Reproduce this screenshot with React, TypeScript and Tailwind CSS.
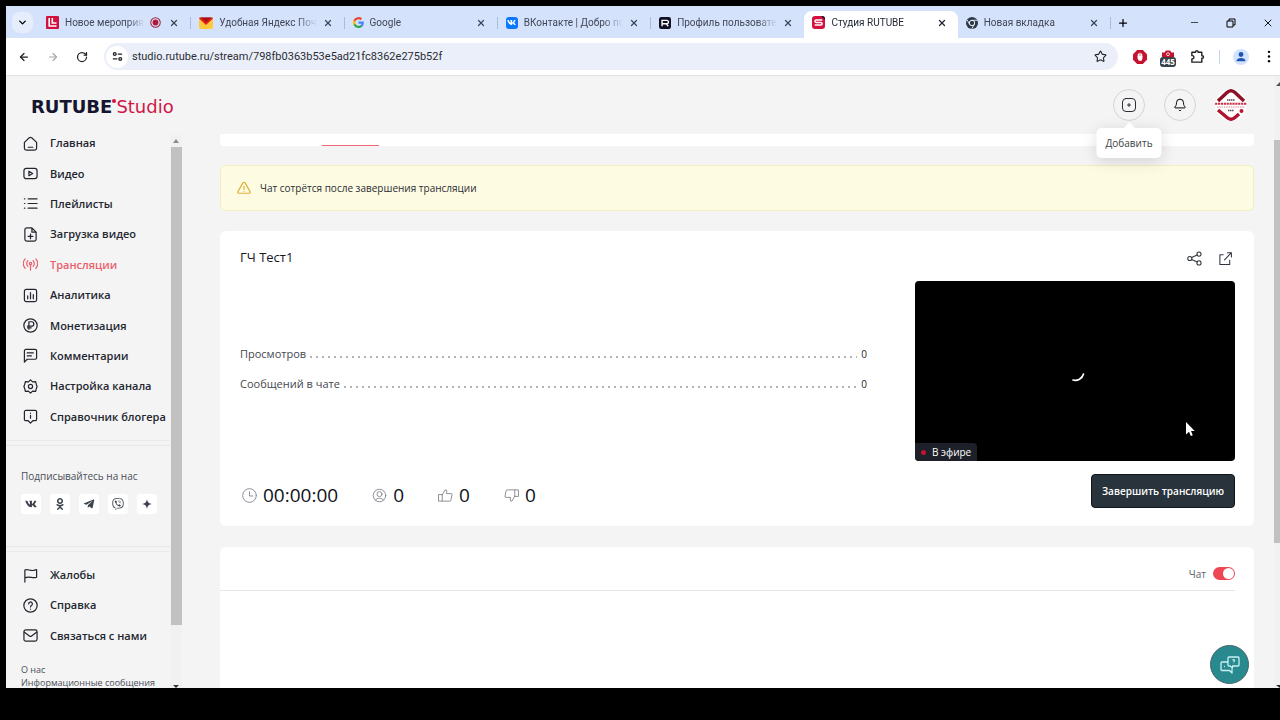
import type { ReactNode } from "react";
import {
  ArrowLeft,
  ArrowRight,
  Bell,
  ChevronDown,
  Minus,
  Plus,
  RotateCw,
  Star,
  X,
} from "lucide-react";
import { FaOdnoklassniki, FaTelegramPlane, FaViber, FaVk } from "react-icons/fa";

type IconProps = { children: ReactNode; className?: string; width?: number };

function Icon({ children, className = "size-4", width = 1.3 }: IconProps) {
  return (
    <svg
      viewBox="0 0 16 16"
      fill="none"
      stroke="currentColor"
      strokeWidth={width}
      strokeLinecap="round"
      strokeLinejoin="round"
      className={`shrink-0 ${className}`}
      aria-hidden="true"
    >
      {children}
    </svg>
  );
}

/* ---------- browser tabs ---------- */

const favicons = {
  event: (
    <svg viewBox="0 0 13 13" className="size-[13px] shrink-0">
      <rect width="13" height="13" rx="1" fill="#d0103f" />
      <path d="M3.2 2v8h7.3M6.3 2v5h4.2" fill="none" stroke="#fff" strokeWidth="1.6" />
    </svg>
  ),
  mail: (
    <svg viewBox="0 0 14 12" className="h-[12px] w-[14px] shrink-0">
      <rect y="1" width="14" height="11" rx="2" fill="#ffc93c" />
      <path d="M0 1.6Q0 .5 1.2.5h11.6q1.2 0 1.2 1.1L7 8Z" fill="#e3201b" />
      <path d="M1.5.5h11L7 5.5Z" fill="#a81414" />
    </svg>
  ),
  google: (
    <svg viewBox="0 0 24 24" className="size-[11px] shrink-0">
      <path fill="#4285F4" d="M23.5 12.3c0-.8-.1-1.6-.2-2.3H12v4.5h6.5a5.5 5.5 0 0 1-2.4 3.6v3h3.900c2.200-2.100 3.500-5.200 3.500-8.800Z" />
      <path fill="#34A853" d="M12 24c3.200 0 6-1.100 8-2.900l-3.900-3c-1.100.7-2.500 1.200-4.100 1.200-3.100 0-5.800-2.100-6.700-5H1.300v3.100A12 12 0 0 0 12 24Z" />
      <path fill="#FBBC05" d="M5.300 14.300a7.200 7.200 0 0 1 0-4.600V6.600h-4a12 12 0 0 0 0 10.800l4-3.100Z" />
      <path fill="#EA4335" d="M12 4.800c1.800 0 3.300.6 4.600 1.800l3.400-3.400A12 12 0 0 0 1.300 6.600l4 3.100c.9-2.800 3.600-4.900 6.700-4.900Z" />
    </svg>
  ),
  vk: (
    <span className="flex size-[12px] shrink-0 items-center justify-center rounded-[3px] bg-[#0a77ff]">
      <FaVk className="size-[9px] text-white" />
    </span>
  ),
  profile: (
    <svg viewBox="0 0 13 13" className="size-[12px] shrink-0">
      <rect width="13" height="13" rx="2.500" fill="#100f24" />
      <path d="M3.300 10V3.700h5.200a1.500 1.500 0 0 1 0 3.600H3.300M8 7.400l2 2.600" fill="none" stroke="#fff" strokeWidth="1.500" />
    </svg>
  ),
  studio: (
    <svg viewBox="0 0 13 13" className="size-[13px] shrink-0">
      <rect width="13" height="13" rx="3" fill="#d3123f" />
      <path d="M10 0a3 3 0 0 1 3 3v1L9 0Z" fill="#1c1530" />
      <path d="M10.300 3.900H4.200a1.200 1.200 0 0 0 0 2.500h4.600a1.300 1.300 0 0 1 0 2.700H2.700" fill="none" stroke="#fff" strokeWidth="1.500" />
    </svg>
  ),
  chrome: (
    <svg viewBox="0 0 12 12" className="size-[12px] shrink-0">
      <circle cx="6" cy="6" r="6" fill="#2e3a46" />
      <circle cx="6" cy="6" r="2.700" fill="#2e3a46" stroke="#e9effb" strokeWidth="1" />
      <path d="M6 3.300h5.200M3.600 7.300 1.200 3M8.300 7.400l-2.500 4.400" stroke="#e9effb" strokeWidth=".9" />
    </svg>
  ),
};

type TabInfo = { title: string; icon: keyof typeof favicons; active?: boolean; recording?: boolean; divider?: boolean };

const tabs: TabInfo[] = [
  { title: "Новое мероприят", icon: "event", recording: true, divider: true },
  { title: "Удобная Яндекс Почт", icon: "mail", divider: true },
  { title: "Google", icon: "google", divider: true },
  { title: "ВКонтакте | Добро по", icon: "vk", divider: true },
  { title: "Профиль пользовате", icon: "profile" },
  { title: "Студия RUTUBE", icon: "studio", active: true },
  { title: "Новая вкладка", icon: "chrome", divider: true },
];

function Tab({ title, icon, active, recording, divider }: TabInfo) {
  return (
    <div className="flex h-full min-w-0 flex-1 items-end">
      <div
        role="tab"
        aria-selected={!!active}
        className={`flex h-[27px] min-w-0 flex-1 items-center gap-[6px] pr-[11px] pb-[4px] pl-2 ${
          active ? "rounded-t-lg bg-white text-[#1f2430]" : "text-[#3f4757]"
        }`}
      >
        {favicons[icon]}
        <span className="min-w-0 flex-1 overflow-hidden font-['Roboto',sans-serif] text-[10px] leading-4 whitespace-nowrap [mask-image:linear-gradient(to_right,black_80%,transparent)]">
          {title}
        </span>
        {recording && (
          <svg viewBox="0 0 12 12" className="mr-[2px] size-[11px] shrink-0">
            <circle cx="6" cy="6" r="5.200" fill="none" stroke="#9c2340" strokeWidth="1.100" />
            <circle cx="6" cy="6" r="3.200" fill="#b3173a" />
          </svg>
        )}
        <button type="button" aria-label="Закрыть вкладку" className="shrink-0">
          <X className="size-[10px]" strokeWidth={3} />
        </button>
      </div>
      {divider && <span className="mb-[9px] h-3 w-px bg-[#a9bce0]" />}
    </div>
  );
}

function TabStrip() {
  return (
    <div className="flex h-8 shrink-0 items-end bg-[#d5e2fb]">
      <button
        type="button"
        aria-label="Поиск вкладок"
        className="mb-[5px] ml-[6px] flex size-[21px] shrink-0 items-center justify-center rounded-lg bg-[#e6eefd]"
      >
        <ChevronDown className="size-[11px]" strokeWidth={3} />
      </button>
      <div role="tablist" className="ml-[5px] flex h-full min-w-0 shrink basis-[1073px]">
        {tabs.map((tab) => (
          <Tab key={tab.title} {...tab} />
        ))}
      </div>
      <div className="flex h-[27px] flex-1 items-center justify-between pb-[4px] pl-[6px]">
        <button type="button" aria-label="Новая вкладка">
          <Plus className="size-3" strokeWidth={2.5} />
        </button>
        <div className="flex items-center gap-[26px] pr-[6px]">
          <button type="button" aria-label="Свернуть">
            <Minus className="size-[11px]" strokeWidth={1.500} />
          </button>
          <button type="button" aria-label="Восстановить">
            <svg viewBox="0 0 10 10" className="size-[10px]" fill="none" stroke="currentColor" strokeWidth="1">
              <path d="M1 3h6v6H1ZM3 3V1h6v6H7" />
            </svg>
          </button>
          <button type="button" aria-label="Закрыть">
            <X className="size-3" strokeWidth={1.800} />
          </button>
        </div>
      </div>
    </div>
  );
}

function AddressBar() {
  return (
    <div className="flex h-[38px] shrink-0 items-center border-b border-[#dfe1e6] bg-white pr-[9px] pl-3 text-[#202124]">
      <div className="flex items-center gap-[17px]">
        <button type="button" aria-label="Назад">
          <ArrowLeft className="size-3" strokeWidth={2.500} />
        </button>
        <button type="button" aria-label="Вперёд" className="text-[#a2a5aa]">
          <ArrowRight className="size-3" strokeWidth={2.200} />
        </button>
        <button type="button" aria-label="Обновить">
          <RotateCw className="size-3" strokeWidth={2.500} />
        </button>
      </div>
      <div className="ml-4 flex h-[27px] flex-1 items-center rounded-full bg-[#ebeff9] pr-[11px] pl-[2px]">
        <button
          type="button"
          aria-label="Сведения о сайте"
          className="flex size-[22px] items-center justify-center rounded-full bg-white"
        >
          <Icon className="size-[11px]" width={1.900}>
            <circle cx="4" cy="4.500" r="2" />
            <path d="M9 4.500h5M2 11.500h5" />
            <circle cx="12" cy="11.500" r="2" />
          </Icon>
        </button>
        <input
          type="text"
          aria-label="Адресная строка"
          defaultValue="studio.rutube.ru/stream/798fb0363b53e5ad21fc8362e275b52f"
          className="ml-1 min-w-0 flex-1 bg-transparent font-['Roboto',sans-serif] text-[11px] leading-4 text-[#2a2d33] outline-none"
        />
        <button type="button" aria-label="Добавить в закладки">
          <Star className="size-[13px]" strokeWidth={2} />
        </button>
      </div>
      <div className="ml-[15px] flex items-center">
        <svg viewBox="0 0 14 14" className="size-[14px]">
          <path d="M4.200 0h5.600L14 4.200v5.600L9.800 14H4.200L0 9.800V4.200Z" fill="#c4122f" />
          <path d="M5.400 7V4.200M7 6V3.200M8.600 7V4.200" stroke="#fff" strokeWidth="1.300" strokeLinecap="round" />
          <path d="M4.600 6h4.800v2.500Q9.200 11 7.200 11 5.300 11 4.600 8.500Z" fill="#fff" />
        </svg>
        <div className="ml-[13px] flex w-4 flex-col items-center pt-1">
          <svg viewBox="0 0 14 7" className="h-[7px] w-[14px]">
            <path d="M1 7V2.500h2.500L5 .5h4l1.500 2H13V7Z" fill="#c4122f" />
            <circle cx="7" cy="4.200" r="1.500" fill="none" stroke="#fff" strokeWidth=".8" />
          </svg>
          <span className="rounded-[3px] bg-[#3a4147] px-px text-[8px] leading-[10px] font-bold text-white">445</span>
        </div>
        <Icon className="ml-[14px] size-[15px]" width={1.500}>
          <path d="M2 3.500h4V3a1.300 1.300 0 0 1 2.600 0v.5h4v3.700h.5a1.300 1.300 0 0 1 0 2.600h-.5V14H2v-3.300h.4a1.700 1.700 0 0 0 0-3.600H2Z" />
        </Icon>
        <span className="ml-[14px] h-[14px] w-px bg-[#c9d6f0]" />
        <svg viewBox="0 0 16 16" className="ml-[13px] size-4">
          <circle cx="8" cy="8" r="8" fill="#d3e2fd" />
          <circle cx="8" cy="5.500" r="2.400" fill="#1f55b5" />
          <path d="M3.500 12.300c0-4.400 9-4.400 9 0Z" fill="#1f55b5" />
        </svg>
        <svg viewBox="0 0 4 14" className="ml-[18px] h-[13px] w-1">
          <circle cx="2" cy="2" r="1.300" />
          <circle cx="2" cy="7" r="1.300" />
          <circle cx="2" cy="12" r="1.300" />
        </svg>
      </div>
    </div>
  );
}

/* ---------- sidebar ---------- */

type NavItem = { label: string; icon: ReactNode; active?: boolean };

const mainNav: NavItem[] = [
  { label: "Главная", icon: <path d="M1.500 6.800 6.700 1.900a2 2 0 0 1 2.600 0l5.200 4.900V13a2 2 0 0 1-2 2h-9a2 2 0 0 1-2-2ZM5.500 12h5" /> },
  {
    label: "Видео",
    icon: (
      <>
        <rect x="1" y="2.500" width="14" height="11" rx="2.500" />
        <path d="M6.300 5.600v4.800L10.300 8Z" />
      </>
    ),
  },
  { label: "Плейлисты", icon: <path d="M5.500 3h9.500M5.500 8h9.500M5.500 13h9.500M1.500 3h.5M1.500 8h.5M1.500 13h.5" /> },
  {
    label: "Загрузка видео",
    icon: <path d="M9.500 1H4a2 2 0 0 0-2 2v10a2 2 0 0 0 2 2h8a2 2 0 0 0 2-2V5.500ZM9.500 1v4.500H14M8 7.500v5M5.500 10h5" />,
  },
  {
    label: "Трансляции",
    active: true,
    icon: (
      <>
        <circle cx="8" cy="7" r="1.300" />
        <path d="M8 8.300V14M5.200 10a4.200 4.200 0 0 1 0-6M10.800 10a4.200 4.200 0 0 0 0-6M2.300 12a7.300 7.300 0 0 1 0-10M13.700 12a7.300 7.300 0 0 0 0-10" />
      </>
    ),
  },
  {
    label: "Аналитика",
    icon: (
      <>
        <rect x="1.500" y="1.500" width="13" height="13" rx="2" />
        <path d="M5 8.500v3M8 5v6.500M11 7v4.500" />
      </>
    ),
  },
  {
    label: "Монетизация",
    icon: (
      <>
        <circle cx="8" cy="8" r="7.100" />
        <path d="M6.300 12V4h2.900a2.300 2.300 0 0 1 0 4.700H4.800M4.800 10.500h4" />
      </>
    ),
  },
  { label: "Комментарии", icon: <path d="M1.500 15V3a1.500 1.500 0 0 1 1.500-1.500h10A1.500 1.500 0 0 1 14.500 3v7.500A1.500 1.500 0 0 1 13 12H4.500ZM4.500 5.300h6.500M4.500 8.300H9" /> },
  {
    label: "Настройка канала",
    icon: (
      <>
        <path d="m8 .9 2.200 2.200 3.200-.4.800 3L15 8l-.8 2.300-.8 3-3.200-.4L8 15.100l-2.200-2.200-3.200.4-.8-3L1 8l.8-2.300.8-3 3.200.4Z" />
        <circle cx="8" cy="8" r="2.200" />
      </>
    ),
  },
  { label: "Справочник блогера", icon: <path d="M3 1.500h10A1.500 1.500 0 0 1 14.500 3v8a1.500 1.500 0 0 1-1.500 1.500h-2.500L8 15l-2.500-2.500H3A1.500 1.500 0 0 1 1.500 11V3A1.500 1.500 0 0 1 3 1.500ZM8 6.800v3M8 4.500v.1" /> },
];

const helpNav: NavItem[] = [
  { label: "Жалобы", icon: <path d="M2 15V2.200c3-1.700 5.500 1.300 9.500.3l3-.7v8c-4 1.700-7.500-1.300-12.500.7" /> },
  {
    label: "Справка",
    icon: (
      <>
        <circle cx="8" cy="8" r="7.100" />
        <path d="M6 6.300a2 2 0 1 1 3 1.700c-.7.400-1 .8-1 1.500M8 11.800v.1" />
      </>
    ),
  },
  {
    label: "Связаться с нами",
    icon: (
      <>
        <rect x="1" y="2" width="14" height="12" rx="2" />
        <path d="m1.500 4.500 5.300 4a2 2 0 0 0 2.400 0l5.300-4" />
      </>
    ),
  },
];

function NavList({ items, className }: { items: NavItem[]; className: string }) {
  return (
    <ul className={`grid auto-rows-fr pl-[17px] ${className}`}>
      {items.map((item) => (
        <li key={item.label} className="flex">
          <a
            href="#"
            className={`flex items-center gap-[12px] text-[11px] leading-4 font-semibold whitespace-nowrap ${
              item.active ? "text-[#ea5f6c]" : "text-[#23262e]"
            }`}
          >
            <Icon className="size-[15px]">{item.icon}</Icon>
            {item.label}
          </a>
        </li>
      ))}
    </ul>
  );
}

const socials = [
  { name: "ВКонтакте", icon: <FaVk className="size-3" /> },
  { name: "Одноклассники", icon: <FaOdnoklassniki className="size-3" /> },
  { name: "Telegram", icon: <FaTelegramPlane className="size-3" /> },
  { name: "Viber", icon: <FaViber className="size-3" /> },
  {
    name: "Дзен",
    icon: (
      <svg viewBox="0 0 12 12" className="size-3">
        <path d="M6 1q.3 4.500 5 5-4.700.5-5 5-.3-4.500-5-5 4.700-.5 5-5Z" fill="currentColor" />
      </svg>
    ),
  },
];

function Sidebar() {
  return (
    <aside className="flex w-[176px] shrink-0 overflow-hidden">
      <nav className="flex w-[164px] shrink-0 flex-col">
        <NavList items={mainNav} className="h-[304px] shrink-0" />
        <div className="mt-2 h-[6px] shrink-0 border-y border-[#e9e9ea]" />
        <div className="mt-[22px] shrink-0 pl-[15px]">
          <p className="text-[10px] leading-4 text-[#4a4e57]">Подписывайтесь на нас</p>
          <div className="mt-[10px] flex gap-[9px]">
            {socials.map((s) => (
              <a
                key={s.name}
                href="#"
                aria-label={s.name}
                className="flex size-5 items-center justify-center rounded-[3px] bg-white text-[#3d434d]"
              >
                {s.icon}
              </a>
            ))}
          </div>
        </div>
        <div className="mt-8 h-[6px] shrink-0 border-y border-[#e9e9ea]" />
        <NavList items={helpNav} className="mt-[8px] h-[91px] shrink-0" />
        <div className="mt-3 flex shrink-0 flex-col pl-[15px] text-[9px] leading-[13px] text-[#4a4e57]">
          <a href="#">О нас</a>
          <a href="#" className="whitespace-nowrap">Информационные сообщения</a>
        </div>
      </nav>
      <div className="mt-[7px] flex w-3 flex-col items-center bg-[#f1f1f1]">
        <svg viewBox="0 0 6 4" className="my-1 h-1 w-[6px] shrink-0">
          <path d="M0 4 3 0l3 4Z" fill="#8a8a8a" />
        </svg>
        <div className="h-[478px] w-[11px] shrink-0 bg-[#c1c1c1]" />
        <svg viewBox="0 0 6 4" className="mt-auto h-1 w-[6px] shrink-0">
          <path d="M0 1h6L3 4Z" fill="#333" />
        </svg>
      </div>
    </aside>
  );
}

/* ---------- page ---------- */

function Header() {
  return (
    <header className="flex h-[52px] shrink-0 items-center justify-between pt-[6px] pr-[27px] pl-[25px]">
      <a href="#" aria-label="RUTUBE Studio" className="flex items-center pt-1 font-['DejaVu_Sans',sans-serif] text-[18px] leading-5">
        <span className="font-bold text-[#14152e]">RUTUBE</span>
        <span className="mb-3 size-1 rounded-full bg-[#d3123f]" />
        <span className="text-[#cf1745]">Studio</span>
      </a>
      <div className="flex items-center gap-[19px]">
        <div className="relative">
          <button type="button" aria-label="Добавить" className="flex size-8 items-center justify-center rounded-full border border-[#d4d4d6]">
            <Icon className="size-4 text-[#2b2e36]" width={1}>
              <rect x="1.500" y="1.500" width="13" height="13" rx="3.500" />
              <path d="M8 6.500v3M6.500 8h3" />
            </Icon>
          </button>
          <div
            role="tooltip"
            className="absolute top-[39px] left-1/2 z-10 -translate-x-1/2 rounded-[5px] bg-white px-[9px] py-[7px] text-[10px] leading-4 text-[#3c3f46] shadow-[0_3px_16px_rgba(0,0,0,0.14)]"
          >
            <span className="absolute -top-1 left-1/2 size-2 -translate-x-1/2 rotate-45 bg-white" />
            <span className="relative">Добавить</span>
          </div>
        </div>
        <button type="button" aria-label="Уведомления" className="flex size-8 items-center justify-center rounded-full border border-[#d4d4d6]">
          <Bell className="size-[14px]" strokeWidth={1.700} />
        </button>
        <button type="button" aria-label="Профиль" className="size-8 overflow-hidden rounded-full bg-white">
          <svg viewBox="0 0 32 32" className="size-8" fill="none">
            <path d="M3 12 12 3.500Q16 0 20 3.500L29 12" stroke="#8e1226" strokeWidth="3.400" />
            <path d="m3 21 9 7.500q4 3.500 8 0l4-3.500" stroke="#b0142e" strokeWidth="3.400" />
            <path d="M0 14.700h32" stroke="#c62c45" strokeWidth="2" strokeDasharray="2.200 .7" />
            <path d="M2 18h28" stroke="#d88a96" strokeWidth="1.200" strokeDasharray="1.500 .8" />
            <path d="M12 11h8M13 21.500h6" stroke="#5a4650" strokeWidth="1.300" strokeDasharray="1.500 .5" />
            <circle cx="26.500" cy="22" r="2" fill="#c4122f" />
          </svg>
        </button>
      </div>
    </header>
  );
}

function MetricRow({ label, value }: { label: string; value: number }) {
  return (
    <div className="flex items-center text-[#45484f]">
      <dt className="text-[11px] leading-4">{label}</dt>
      <div className="mt-[6px] mr-1 ml-[2px] h-[2px] flex-1 bg-[radial-gradient(circle,#b4b4b4_1px,transparent_1px)] bg-[length:6px_2px]" />
      <dd className="text-[10px] leading-4 font-medium text-[#1b1d24]">{value}</dd>
    </div>
  );
}

const stats = [
  {
    name: "Длительность",
    value: "00:00:00",
    icon: (
      <>
        <circle cx="8" cy="8" r="7.300" />
        <path d="M8 4v4.500h3.500" />
      </>
    ),
  },
  {
    name: "Зрители",
    value: "0",
    icon: (
      <>
        <circle cx="8" cy="8" r="6.700" />
        <circle cx="8" cy="6.500" r="2.700" />
        <path d="M3.700 12.700c1.800-2.400 6.800-2.400 8.600 0" />
      </>
    ),
  },
  { name: "Нравится", value: "0", icon: <path d="M1 7h3.500v7H1ZM4.500 7.500 7.500 2q2-.5 1.800 1.700L9 6h5a1 1 0 0 1 1 1.200l-1.300 6a1 1 0 0 1-1 .8H4.500" /> },
  { name: "Не нравится", value: "0", icon: <path d="M15 9h-3.500V2H15ZM11.500 8.500 8.500 14q-2 .5-1.800-1.700L7 10H2a1 1 0 0 1-1-1.200l1.300-6a1 1 0 0 1 1-.8h8.200" /> },
];

function StreamCard() {
  return (
    <section className="mt-5 flex h-[295px] shrink-0 flex-col rounded-md bg-white pt-[18px] pr-[19px] pb-[18px] pl-5">
      <div className="flex items-start justify-between">
        <h1 className="text-[13px] leading-4 font-medium text-[#15181f]">ГЧ Тест1</h1>
        <div className="flex gap-4 pt-[2px] pr-[2px] text-[#30343c]">
          <button type="button" aria-label="Поделиться">
            <Icon className="size-[15px]" width={1.100}>
              <circle cx="3" cy="8" r="2.200" />
              <circle cx="12.800" cy="3.300" r="2.200" />
              <circle cx="12.800" cy="12.700" r="2.200" />
              <path d="m5 7 5.800-2.700M5 9l5.800 2.700" />
            </Icon>
          </button>
          <button type="button" aria-label="Открыть в новой вкладке">
            <Icon className="size-[15px]" width={1.100}>
              <path d="M5.500 4H2v10.500h10.500V10M7 9.500 14 2M10 1.800h4.300v4.500" />
            </Icon>
          </button>
        </div>
      </div>
      <div className="mt-[15px] flex items-center gap-12">
        <dl className="flex flex-1 flex-col gap-[14px] pb-[5px]">
          <MetricRow label="Просмотров" value={0} />
          <MetricRow label="Сообщений в чате" value={0} />
        </dl>
        <div className="relative flex aspect-video w-[320px] shrink-0 items-center justify-center rounded-[4px] bg-black">
          <svg viewBox="0 0 24 24" className="size-6" fill="none">
            <path d="M20.500 15a8.500 8.500 0 0 1-10.500 6" stroke="#fff" strokeWidth="1.700" strokeLinecap="round" />
          </svg>
          <div className="absolute bottom-0 left-0 flex items-center gap-[6px] rounded-tr-sm rounded-bl-[4px] bg-[#1d2029] px-[6px] py-px text-[10px] leading-4 text-white">
            <span className="size-[5px] rounded-full bg-[#c4122f]" />
            В эфире
          </div>
          <svg viewBox="0 0 10 16" className="absolute right-[40px] bottom-[24px] h-4 w-[10px]">
            <path d="M1 1v12.500l3-2.700 1.800 4.300 2-.8-1.800-4.200h3.700Z" fill="#fff" />
          </svg>
        </div>
      </div>
      <div className="mt-[13px] flex items-start justify-between">
        <ul className="flex gap-[34px] pt-[9px] pl-[2px]">
          {stats.map((s) => (
            <li key={s.name} aria-label={s.name} className="flex items-center gap-[6px] text-[19px] leading-6 font-medium text-[#101218]">
              <Icon className="size-[15px] text-[#878a90]" width={1}>
                {s.icon}
              </Icon>
              {s.value}
            </li>
          ))}
        </ul>
        <button
          type="button"
          className="h-[34px] w-[144px] rounded-[4px] border border-[#0f151a] bg-[#28333b] text-[10px] leading-4 font-semibold whitespace-nowrap text-white"
        >
          Завершить трансляцию
        </button>
      </div>
    </section>
  );
}

function ChatCard() {
  return (
    <section className="mt-[21px] flex min-h-0 flex-1 flex-col rounded-t-md bg-white">
      <div className="mr-[19px] flex h-11 shrink-0 items-center justify-end border-b border-[#e6e6e8] pt-[10px]">
        <label className="flex items-center gap-[7px] text-[10px] leading-4 text-[#5a5d64]">
          Чат
          <input
            type="checkbox"
            defaultChecked
            className="flex h-[13px] w-[22px] appearance-none items-center justify-end rounded-full bg-[#ee4654] pr-px before:size-[11px] before:rounded-full before:bg-white before:content-['']"
          />
        </label>
      </div>
    </section>
  );
}

export default function App() {
  return (
    <div className="flex h-screen min-h-[480px] flex-col bg-black pt-[6px] pb-8 pl-[6px] font-['Open_Sans','Noto_Sans',sans-serif]">
      <TabStrip />
      <AddressBar />
      <div className="relative flex min-h-0 flex-1 bg-[#f4f4f5]">
        <div className="flex min-w-0 flex-1 flex-col">
          <Header />
          <div className="flex min-h-0 flex-1">
            <Sidebar />
            <main className="mr-5 ml-[38px] flex min-w-0 flex-1 flex-col pt-[6px]">
              <div className="flex h-3 shrink-0 items-end rounded-b-sm bg-white pl-[102px]">
                <span className="h-px w-[57px] bg-[#f06a76]" />
              </div>
              <div
                role="alert"
                className="mt-[19px] flex h-[46px] shrink-0 items-center gap-[9px] rounded-[5px] border border-[#f5eec2] bg-[#fdfbe2] pl-4 text-[10px] leading-4 text-[#2b2d33]"
              >
                <Icon className="size-[14px] text-[#e0b23c]" width={1.400}>
                  <path d="M6.800 2.200 1.200 11.800A1.400 1.400 0 0 0 2.400 14h11.200a1.400 1.400 0 0 0 1.200-2.200L9.200 2.200a1.400 1.400 0 0 0-2.400 0ZM8 6v3.500M8 11.700v.1" />
                </Icon>
                Чат сотрётся после завершения трансляции
              </div>
              <StreamCard />
              <ChatCard />
            </main>
          </div>
        </div>
        <div className="flex w-[6px] shrink-0 flex-col overflow-hidden bg-[#f1f1f1]">
          <svg viewBox="0 0 6 4" className="mt-[6px] h-1 w-[6px] shrink-0">
            <path d="M2 4 6 0v4Z" fill="#505050" />
          </svg>
          <div className="mt-[54px] h-[403px] w-full shrink-0 bg-[#c1c1c1]" />
          <svg viewBox="0 0 6 4" className="mt-auto h-1 w-[6px] shrink-0">
            <path d="M2 1h4v3Z" fill="#222" />
          </svg>
        </div>
        <button
          type="button"
          aria-label="Чат поддержки"
          className="absolute right-[31px] bottom-1 flex size-[39px] items-center justify-center rounded-full border border-[#47676c] bg-[#28898f] text-[#c9f2f3]"
        >
          <svg viewBox="0 0 20 18" className="h-[18px] w-5" fill="none" stroke="currentColor" strokeWidth="1.300" strokeLinejoin="round">
            <path d="M9 1h9a1 1 0 0 1 1 1v7a1 1 0 0 1-1 1h-5.500v2L10 10H9a1 1 0 0 1-1-1V2a1 1 0 0 1 1-1Z" />
            <path d="M8 6H2a1 1 0 0 0-1 1v6.500a1 1 0 0 0 1 1h7.500L12 17v-4.500M4 10.500h.8" />
            <path d="M12.500 4.200q1.700-1.200 2 .3 0 .8-1 1.300M13.500 7.500v.2" />
          </svg>
        </button>
      </div>
    </div>
  );
}
